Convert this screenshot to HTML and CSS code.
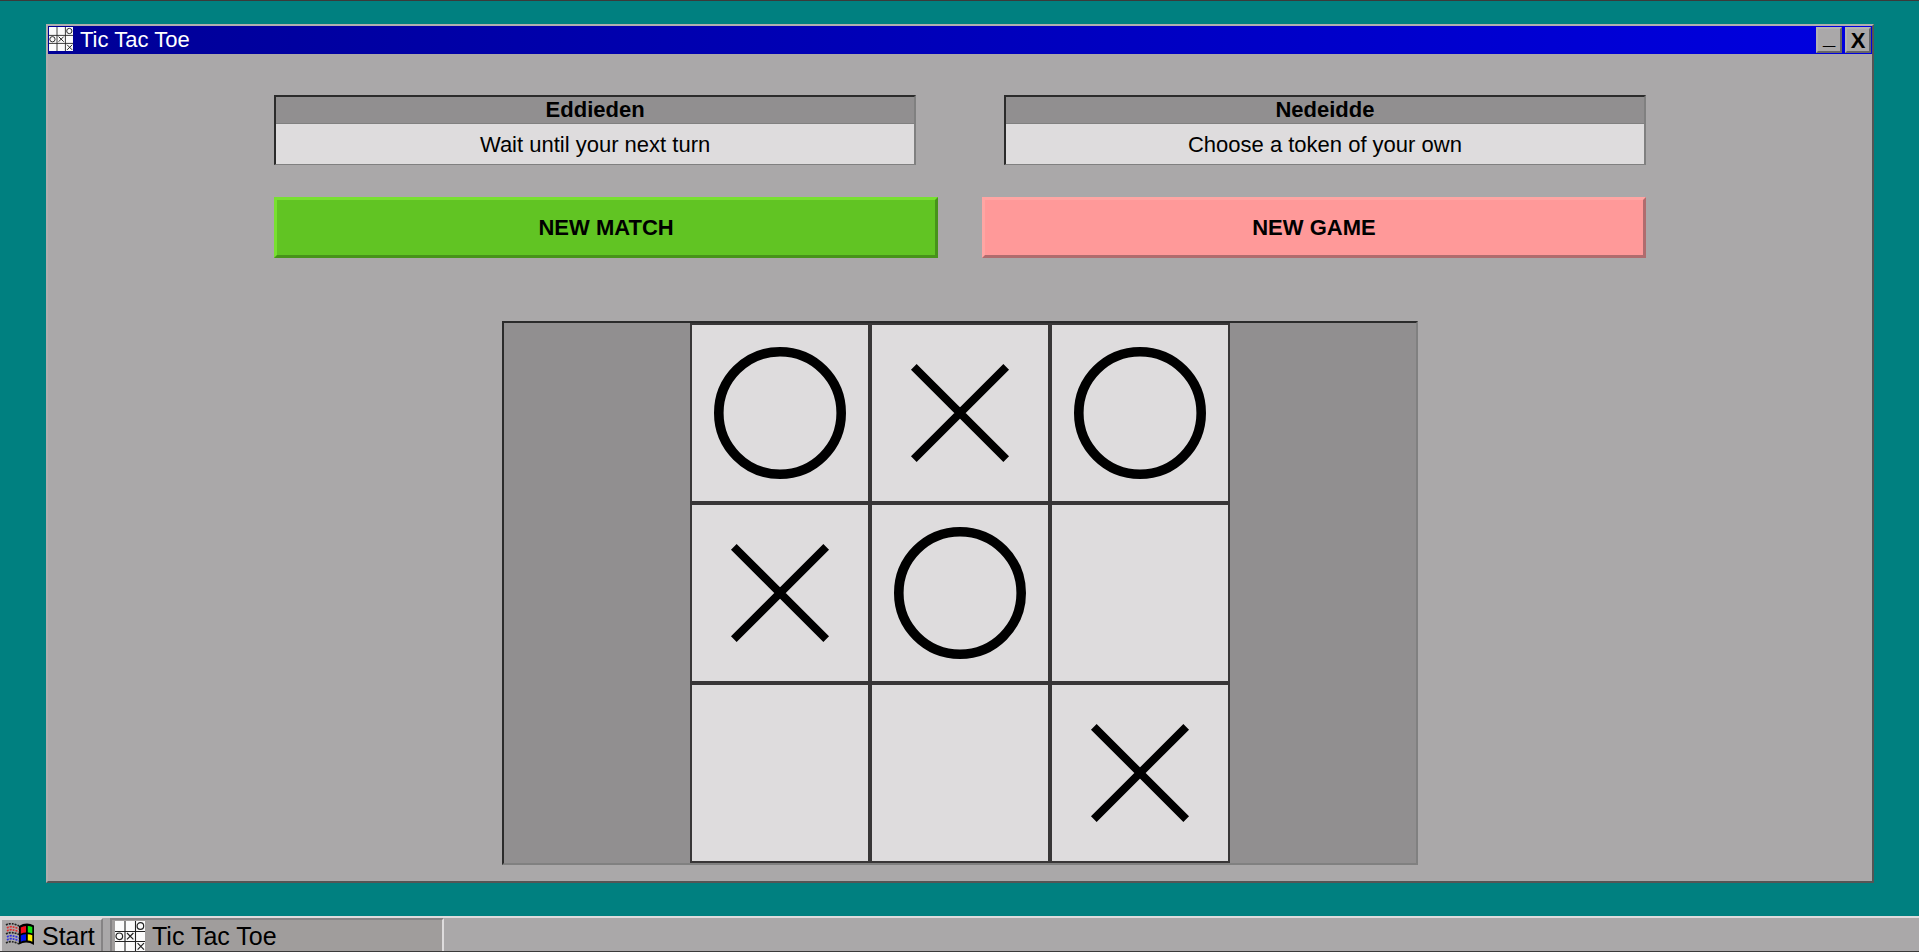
FILE: index.html
```html
<!DOCTYPE html>
<html lang="en">
<head>
<meta charset="utf-8">
<title>Tic Tac Toe</title>
<link rel="stylesheet" href="styles.css">
</head>
<body>
<svg class="defs" aria-hidden="true">
  <symbol id="app-icon" viewBox="0 0 30 30">
    <rect width="30" height="30" fill="#fbfbfb"/>
    <path d="M10 0V30M20.500 0V30M0 10.500H30M0 20.500H30" stroke="#222" stroke-width="1.100" fill="none"/>
    <circle cx="25.400" cy="5" r="3.300" fill="none" stroke="#222" stroke-width="1.200"/>
    <circle cx="4.300" cy="15.300" r="3.300" fill="none" stroke="#222" stroke-width="1.200"/>
    <path d="M12 12L18.400 18.400M18.400 12L12 18.400M22.600 22.200L29 28.600M29 22.200L22.600 28.600" stroke="#222" stroke-width="1.200"/>
  </symbol>
  <symbol id="token-o" viewBox="0 0 176 176"><circle cx="88" cy="88" r="61.200" fill="none" stroke="#000" stroke-width="9.600"/></symbol>
  <symbol id="token-x" viewBox="0 0 176 176"><path d="M41.800 41.800L134.200 134.200M134.200 41.800L41.800 134.200" stroke="#000" stroke-width="8"/></symbol>
</svg>
<main class="desktop">
  <section class="window">
    <header class="titlebar">
      <svg class="titlebar-icon"><use href="#app-icon"/></svg>
      <h1 class="title">Tic Tac Toe</h1>
      <button class="control minimize" aria-label="Minimize">_</button>
      <button class="control" aria-label="Close">X</button>
    </header>
    <div class="content">
      <div class="players">
        <section class="player"><h2 class="player-name">Eddieden</h2><p class="player-status">Wait until your next turn</p></section>
        <section class="player"><h2 class="player-name">Nedeidde</h2><p class="player-status">Choose a token of your own</p></section>
      </div>
      <div class="actions">
        <button class="action match">NEW MATCH</button>
        <button class="action game">NEW GAME</button>
      </div>
      <div class="board">
        <button class="cell" aria-label="O"><svg class="token"><use href="#token-o"/></svg></button>
        <button class="cell" aria-label="X"><svg class="token"><use href="#token-x"/></svg></button>
        <button class="cell" aria-label="O"><svg class="token"><use href="#token-o"/></svg></button>
        <button class="cell" aria-label="X"><svg class="token"><use href="#token-x"/></svg></button>
        <button class="cell" aria-label="O"><svg class="token"><use href="#token-o"/></svg></button>
        <button class="cell" aria-label="Empty"></button>
        <button class="cell" aria-label="Empty"></button>
        <button class="cell" aria-label="Empty"></button>
        <button class="cell" aria-label="X"><svg class="token"><use href="#token-x"/></svg></button>
      </div>
    </div>
  </section>
</main>
<footer class="taskbar">
  <button class="start">
    <svg class="start-icon" viewBox="0 0 30 24">
      <path d="M14 3Q21.500 -1.500 29 2.500V22Q21.500 17.500 14 21.500Z" fill="#000"/>
      <path d="M15.800 4.500Q18 3 21 3V9.500Q18 9.500 15.800 10.800Z" fill="#f00d1a"/>
      <path d="M22.800 3Q25 3 27.300 4V10.500Q25 9.500 22.800 9.500Z" fill="#12e312"/>
      <path d="M15.800 12.500Q18 11.300 21 11.300V17.500Q18 17.500 15.800 18.700Z" fill="#0010f0"/>
      <path d="M22.800 11.300Q25 11.300 27.300 12.300V18.700Q25 17.500 22.800 17.500Z" fill="#fff000"/>
      <g fill="none" stroke-width="1.700" stroke-dasharray="2 1">
        <path d="M1 2Q6 -1 14 3M1 11Q6 8 14 11.500M1 20Q6 17 14 21" stroke="#222"/>
        <path d="M2 5Q6 2 14 6M2 8Q6 5 14 9" stroke="#e03030"/>
        <path d="M2 14Q6 11 14 15M2 17Q6 14 14 18" stroke="#3030e0"/>
      </g>
    </svg>
    <span>Start</span>
  </button>
  <button class="task"><svg class="task-icon"><use href="#app-icon"/></svg><span>Tic Tac Toe</span></button>
</footer>
</body>
</html>
```
FILE: styles.css
```css
* { box-sizing: border-box; }
body {
  display: flex;
  flex-direction: column;
  min-height: 100vh;
  margin: 0;
  border-top: 1px solid #3a3a3a;
  border-bottom: 1px solid #3a3a3a;
  background: #008080;
  color: #000;
  font: 22px/26px "Liberation Sans", Arial, sans-serif;
}
button { margin: 0; padding: 0; color: inherit; font: inherit; border-radius: 0; }
h1, h2, p { margin: 0; font-size: inherit; }
.defs { position: absolute; width: 0; height: 0; }
.desktop { flex: 1; padding: 23px 45px 33px 46px; }
.window {
  border: 2px solid;
  border-color: #b0aeae #555 #555 #b0aeae;
  background: #aaa8a9;
}
.titlebar {
  display: flex;
  align-items: flex-start;
  gap: 3px;
  height: 28px;
  padding: 1px;
  background: linear-gradient(to right, #000096, #0000e0);
}
.titlebar-icon { width: 24px; height: 24px; }
.title { flex: 1; padding-left: 4px; color: #fff; font-weight: 400; line-height: 26px; }
.control {
  width: 26px;
  height: 26px;
  border: 2px solid;
  border-color: #b4b2b2 #666 #666 #b4b2b2;
  background: #aaa8a9;
  font-weight: 700;
  line-height: 24px;
}
.minimize { line-height: 16px; padding-bottom: 6px; }
.content { display: flex; flex-direction: column; align-items: center; padding: 41px 0 16px; }
.players, .actions { display: flex; width: 75.2%; }
.players { gap: 88px; }
.actions { gap: 44px; margin: 32px 0 63px; }
.player {
  flex: 1;
  border: 2px solid;
  border-color: #2b2b2b #808080 #808080 #2b2b2b;
  border-bottom-width: 1px;
  text-align: center;
}
.player-name { height: 27px; border-bottom: 1px solid #808080; background: #918f90; font-weight: 700; }
.player-status { padding: 8px 0 6px; background: #dedcdd; }
.action { flex: 1; height: 61px; border: 3px solid; font-weight: 700; }
.match { border-color: #78e030 #47931a #47931a #78e030; background: #61c423; }
.game { border-color: #ffa5a3 #b06c6e #b06c6e #ffa5a3; background: #ff9999; }
.board {
  display: grid;
  grid-template-columns: repeat(3, 180px);
  grid-auto-rows: 180px;
  justify-content: center;
  width: 50.2%;
  min-width: 544px;
  border: 2px solid;
  border-color: #2b2b2b #808080 #808080 #2b2b2b;
  background: #918f90;
}
.cell { border: 2px solid #383637; background: #dedcdd; }
.token { display: block; width: 100%; height: 100%; }
.taskbar {
  display: flex;
  gap: 7px;
  height: 35px;
  border-top: 2px solid #dedcdd;
  background: #aaa8a9;
  font-size: 25px;
}
.start, .task { display: flex; align-items: center; height: 33px; border: 2px solid; white-space: nowrap; }
.start {
  gap: 7px;
  width: 103px;
  padding-left: 3px;
  border-color: #dedcdd #858384 #aaa8a9 #dedcdd;
  border-bottom: 0;
  background: #aaa8a9;
}
.start-icon { width: 30px; height: 24px; margin-bottom: 2px; }
.task {
  gap: 7px;
  width: 334px;
  padding-left: 3px;
  border-color: #858384 #dedcdd #a09d9c #858384;
  border-bottom: 0;
  background: #a09d9c;
}
.task-icon { width: 30px; height: 30px; }
```
